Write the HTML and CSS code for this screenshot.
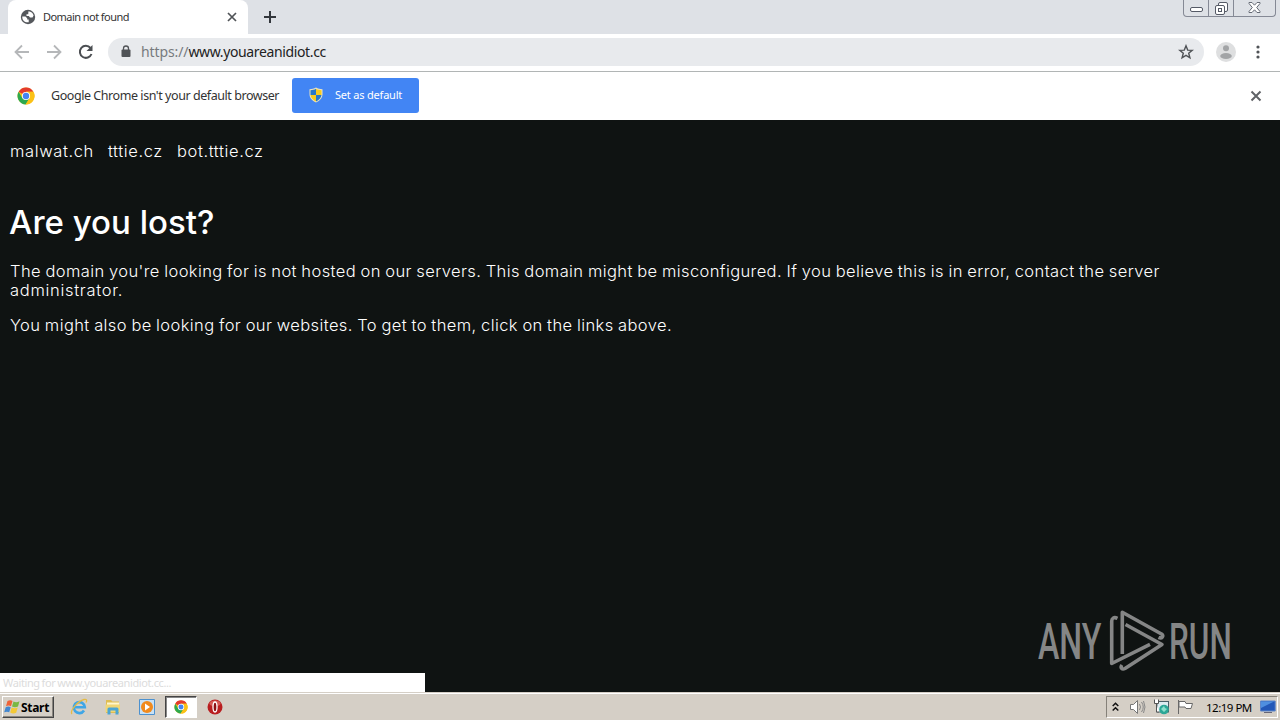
FILE: index.html
```html
<!DOCTYPE html>
<html lang="en">
<head>
  <meta charset="UTF-8">
  <meta name="viewport" content="width=device-width, initial-scale=1.0">
  <title>Domain not found</title>
  <link rel="stylesheet" href="styles.css">
</head>
<body>

  <svg class="defs" width="0" height="0">
    <symbol id="chrome" viewBox="0 0 18 18">
      <circle cx="9" cy="9" r="8.5" fill="#fbc116"/>
      <path d="M9 9 1.64 4.75A8.5 8.5 0 0 1 16.4 4.75H9Z" fill="#e33b2e"/>
      <path d="M1.64 4.75A8.5 8.5 0 0 0 8.6 17.5L12.7 11 9 9 5.3 11Z" fill="#2da94f"/>
      <path d="M9 4.75h7.4A8.5 8.5 0 0 1 8.6 17.5L12.7 11Z" fill="#fbc116"/>
      <circle cx="9" cy="9" r="4.1" fill="#fff"/>
      <circle cx="9" cy="9" r="3.2" fill="#4384f3"/>
    </symbol>
  </svg>

  <div class="tabstrip">
    <div class="tab">
      <svg class="globe" width="16" height="16" viewBox="0 0 16 16">
        <circle cx="8" cy="8" r="7.2" fill="#55585c"/>
        <path d="M2.300 7.500h3.200l1.700 1.700v1.300h1.500v2.800C5 13.800 2 11.500 2.300 7.500ZM8.500 2.300C11 2.500 13 4 13.600 6.500L12.500 8.500H10L8.800 7H6.500V5.300h1.800V3.800Z" fill="#fff"/>
      </svg>
      <span class="tab-title">Domain not found</span>
      <svg class="tab-close" width="10" height="10" viewBox="0 0 10 10"><path d="m1 1 8 8M9 1 1 9" stroke="#505357" stroke-width="1.7"/></svg>
    </div>
    <svg class="new-tab" width="12" height="12" viewBox="0 0 12 12"><path d="M6 0v12M0 6h12" stroke="#32363c" stroke-width="2"/></svg>
    <div class="window-buttons">
      <span class="wb"><svg width="13" height="13" viewBox="0 0 13 13"><rect x=".5" y="5.500" width="12" height="4" rx="1.500" fill="#fff" stroke="#555a66"/></svg></span>
      <span class="wb"><svg width="13" height="13" viewBox="0 0 13 13"><rect x="3.500" y=".5" width="9" height="9" rx="1.500" fill="#fff" stroke="#555a66"/><rect x=".5" y="3.500" width="9" height="9" rx="1.500" fill="#fff" stroke="#555a66"/><rect x="3.500" y="6.500" width="3" height="3" fill="#fff" stroke="#555a66"/></svg></span>
      <span class="wb wide"><svg width="13" height="12" viewBox="0 0 13 12"><path d="M1 .5h3L6.500 3.200 9 .5h3v1L8.700 5.500 12 9.500v1H9L6.500 7.800 4 10.500H1v-1l3.300-4L1 1.500Z" fill="#fff" stroke="#666b76"/></svg></span>
    </div>
  </div>

  <div class="toolbar">
    <svg class="nav-icon" width="16" height="16" viewBox="0 0 16 16"><path d="M15 8H2M8 1.500 1.500 8 8 14.500" fill="none" stroke="#b5b7b9" stroke-width="1.800"/></svg>
    <svg class="nav-icon" width="16" height="16" viewBox="0 0 16 16"><path d="M1 8h13M8 1.500 14.500 8 8 14.500" fill="none" stroke="#b5b7b9" stroke-width="1.800"/></svg>
    <svg class="nav-icon" width="16" height="16" viewBox="0 0 16 16"><path d="M13.500 10A6 6 0 1 1 12.500 4" fill="none" stroke="#4b4e52" stroke-width="2"/><path d="M14.500 1v6h-6Z" fill="#4b4e52"/></svg>
    <div class="omnibox">
      <svg width="10" height="13" viewBox="0 0 10 13"><path d="M2.500 5V3.500a2.500 2.500 0 0 1 5 0V5" fill="none" stroke="#505357" stroke-width="1.300"/><rect x=".5" y="4.500" width="9" height="7.500" rx="1" fill="#505357"/></svg>
      <span class="url"><span class="scheme">https://</span>www.youareanidiot.cc</span>
      <svg class="star" width="16" height="16" viewBox="0 0 16 16"><path d="m8 1.800 1.700 4.300 4.500.3-3.500 2.900 1.200 4.500L8 11.300l-3.900 2.500 1.200-4.500-3.500-2.900 4.500-.3Z" fill="none" stroke="#505357" stroke-width="1.400"/></svg>
    </div>
    <svg class="avatar" width="20" height="20" viewBox="0 0 20 20"><circle cx="10" cy="10" r="10" fill="#dedfe0"/><circle cx="10" cy="6.200" r="3" fill="#a2a4a6"/><ellipse cx="10" cy="14" rx="5.800" ry="3" fill="#a2a4a6"/></svg>
    <svg class="menu" width="4" height="14" viewBox="0 0 4 14" fill="#505357"><circle cx="2" cy="2" r="1.600"/><circle cx="2" cy="7" r="1.600"/><circle cx="2" cy="12" r="1.600"/></svg>
  </div>

  <div class="infobar">
    <svg width="18" height="18"><use href="#chrome"/></svg>
    <span class="info-text">Google Chrome isn't your default browser</span>
    <button class="default-btn">
      <svg width="14" height="16" viewBox="0 0 14 16">
        <path d="M7 .5c2 1.300 4 1.700 6.500 1.700V7c0 4-2.500 6.500-6.500 8.500C3 13.500.5 11 .5 7V2.200C3 2.200 5 1.800 7 .5Z" fill="#e9e3c0"/>
        <path d="M7 1.800V8H1.500V3.200C3.500 3.200 5.400 2.800 7 1.800ZM12.500 8C12.200 11 10 13 7 14.500V8Z" fill="#2878c8"/>
        <path d="M7 1.800c1.600 1 3.500 1.400 5.500 1.400V8H7ZM1.500 8H7v6.500C4 13 1.800 11 1.500 8Z" fill="#f9cb1c"/>
      </svg>
      <span>Set as default</span>
    </button>
    <svg class="info-close" width="12" height="12" viewBox="0 0 12 12"><path d="m1.500 1.500 9 9M10.500 1.500l-9 9" stroke="#606367" stroke-width="2"/></svg>
  </div>

  <div class="page">
    <nav class="links">
      <a>malwat.ch</a>
      <a>tttie.cz</a>
      <a>bot.tttie.cz</a>
    </nav>
    <h1>Are you lost?</h1>
    <p>The domain you're looking for is not hosted on our servers. This domain might be misconfigured. If you believe this is in error, contact the server<br><span class="wide-word">administrator.</span></p>
    <p>You might also be looking for our websites. To get to them, click on the links above.</p>

    <div class="status">Waiting for www.youareanidiot.cc...</div>

    <svg class="watermark" width="204" height="66" viewBox="0 0 204 66">
      <g class="mark-text">
        <text transform="translate(0 50) scale(.64 1)" textLength="99" lengthAdjust="spacingAndGlyphs">ANY</text>
        <text transform="translate(131 50) scale(.64 1)" textLength="98" lengthAdjust="spacingAndGlyphs">RUN</text>
      </g>
      <g fill="none" stroke="#858686" stroke-width="3.600" stroke-linejoin="round">
        <path d="M79.500 9.300c-3.500-1.500-5.800-.3-5.800 3V54.500L112 35.300"/>
        <path d="M84.300 45V3.300L123.500 25c2.500 2 .5 5-3 3.300"/>
        <path d="M87.500 15.500 124 35.500 87 59.500c-3 1.500-5-1-3-3.500"/>
      </g>
    </svg>
  </div>

  <div class="taskbar">
    <div class="start">
      <svg width="17" height="16" viewBox="0 0 17 16">
        <path d="M3.500 2c2-1 3.500-1 5 0L7 7.200c-1.600-.8-3.200-.8-5 0Z" fill="#ee6338"/>
        <path d="M9.500 2.500c2 1 4 .8 6-.2L14 7.500c-2 1-4 1-6 0Z" fill="#79b843"/>
        <path d="M1.700 8.200c1.800-.8 3.400-.8 5 0l-1.500 5.100c-1.500-.9-3-.9-5 0Z" fill="#4287d0"/>
        <path d="M7.700 8.500c2 1 4 1 6 0l-1.500 5.200c-2 1-4 .9-6-.2Z" fill="#f4c936"/>
      </svg>
      <span>Start</span>
    </div>
    <div class="quick">
      <span class="task"><svg width="18" height="18" viewBox="0 0 18 18"><path d="M14 12.500a5.500 5.500 0 1 1 .8-3.300H5" fill="none" stroke="#3fa6e6" stroke-width="2.600"/><path d="M2 16C-.5 13 8 3 14 1.500c3-.7 3 1.300 2 3" fill="none" stroke="#e5bb45" stroke-width="1.300"/></svg></span>
      <span class="task"><svg width="18" height="18" viewBox="0 0 18 18"><path d="M2 2h5l1.500 1.500H15V15H2Z" fill="#dfbd52"/><path d="M3 4.500h12v3H3Z" fill="#fff6cb"/><path d="M1.500 6.500H16V14H1.500Z" fill="#f0d676"/><path d="M3.500 16.500v-5.500q0-1.500 1.500-1.500h8q1.500 0 1.500 1.500v5.500h-3v-4h-5v4Z" fill="#4ba5d3"/></svg></span>
      <span class="task"><svg width="18" height="18" viewBox="0 0 18 18"><path d="M1.500 1.500h15v15h-15Z" fill="#c8e1f5" stroke="#4c91cf"/><circle cx="9" cy="9" r="6" fill="#f18a1c"/><path d="m7 5.500 5 3.500-5 3.500Z" fill="#fff"/></svg></span>
      <span class="task active"><svg width="14" height="14"><use href="#chrome"/></svg></span>
      <span class="task"><svg width="16" height="16" viewBox="0 0 16 16"><circle cx="8" cy="8" r="7.500" fill="#b91e20"/><ellipse cx="8" cy="4.500" rx="5.500" ry="3" fill="#d65b56"/><ellipse cx="8" cy="8" rx="2" ry="5" fill="#8d1013" stroke="#fff" stroke-width="1.300"/></svg></span>
    </div>
    <div class="tray">
      <svg class="chev" width="7" height="10" viewBox="0 0 7 10"><path d="m.7 4 2.800-2.800L6.300 4M.7 8.500l2.800-2.800 2.800 2.800" fill="none" stroke="#111" stroke-width="1.500"/></svg>
      <svg class="sound" width="17" height="16" viewBox="0 0 17 16"><path d="M1.500 5.500h3l4-4v13l-4-4h-3Z" fill="#fff" stroke="#777"/><path d="M10.500 5q2 3 0 6M12.500 3q3.500 5 0 10M14.500 2q3 6 0 12" fill="none" stroke="#888"/></svg>
      <svg class="net" width="17" height="16" viewBox="0 0 17 16"><rect x="4" y="2.500" width="11.500" height="10.500" fill="#dcecf0" stroke="#4a6068"/><path d="M1.500.5v4h4v-4M3.500 4.500V13H6" fill="#fff" stroke="#555"/><circle cx="11" cy="10.500" r="4.800" fill="#2ba797"/><path d="m8 10 3-3 1 2 2 1-3 3Z" fill="#8de0cc"/></svg>
      <svg class="flag" width="17" height="16" viewBox="0 0 17 16"><path d="M1.500 1v14M2 2.500h6l1 2h6.500L14 9.500H9L8 8H2Z" fill="#fff" stroke="#686868"/></svg>
      <span class="clock">12:19 PM</span>
      <svg class="desk" width="16" height="14" viewBox="0 0 16 14"><path d="M.5 1h14.700v10H.5Z" fill="#2358b8" stroke="#5f86c8"/><path d="M1 1.500h13L1 8Z" fill="#4f8fe0"/><path d="M4 12.500h8" stroke="#667"/></svg>
    </div>
  </div>

</body>
</html>
```
FILE: styles.css
```css
* {
  box-sizing: border-box;
}

body {
  margin: 0;
  width: 1280px;
  height: 720px;
  overflow: hidden;
  display: flex;
  flex-direction: column;
  font-family: "Noto Sans", sans-serif;
  background: #fff;
}

svg {
  display: block;
  flex-shrink: 0;
}

.defs {
  position: absolute;
}

/* browser window */
.tabstrip {
  height: 34px;
  background: #dee1e6;
  display: flex;
  padding-left: 8px;
}

.tab {
  width: 240px;
  background: #fff;
  border-radius: 8px 8px 0 0;
  display: flex;
  align-items: center;
  padding: 0 11px 0 12px;
}

.tab-title {
  flex: 1;
  margin-left: 7px;
  padding-bottom: 1px;
  font-size: 11px;
  letter-spacing: -0.55px;
  color: #333;
}

.new-tab {
  margin: 11px 0 0 16px;
}

.window-buttons {
  display: flex;
  margin-left: auto;
  margin-right: 4px;
  width: 93px;
  height: 17px;
  border: 1px solid #858995;
  border-top: none;
  border-radius: 0 0 4px 4px;
}

.wb {
  width: 25px;
  display: flex;
  justify-content: center;
  align-items: center;
  border-right: 1px solid #858995;
}

.wb.wide {
  flex: 1;
  border-right: none;
}

.toolbar {
  height: 38px;
  display: flex;
  align-items: center;
  padding: 0 20px 2px 14px;
  border-bottom: 1px solid #b1b5b5;
}

.nav-icon {
  margin-right: 16px;
}

.omnibox {
  width: 1096px;
  height: 28px;
  margin-left: -2px;
  border-radius: 14px;
  background: #e8eaed;
  display: flex;
  align-items: center;
  padding: 0 10px 0 13px;
}

.url {
  flex: 1;
  margin-left: 10px;
  font-size: 14px;
  letter-spacing: -0.37px;
  color: #222;
}

.scheme {
  color: #777a7e;
  letter-spacing: -0.1px;
}

.avatar {
  margin-left: 12px;
}

.menu {
  margin-left: auto;
}

.infobar {
  height: 48px;
  display: flex;
  align-items: center;
  padding: 0 18px 0 17px;
}

.info-text {
  width: 241px;
  margin-left: 16px;
  padding-bottom: 1px;
  font-size: 12.5px;
  letter-spacing: -0.44px;
  white-space: nowrap;
  color: #333;
}

.default-btn {
  width: 127px;
  height: 35px;
  margin-bottom: 1px;
  border: none;
  border-radius: 3px;
  background: #4285f4;
  color: #fff;
  font-family: inherit;
  font-size: 11px;
  letter-spacing: -0.2px;
  display: flex;
  align-items: center;
  gap: 12px;
  padding: 0 0 2px 17px;
  white-space: nowrap;
}

.info-close {
  margin-left: auto;
}

/* page content */
.page {
  position: relative;
  height: 572px;
  padding: 22px 10px 0;
  background: #0f1312;
  color: #fff;
  font-family: "Inter", sans-serif;
  font-weight: 300;
  font-size: 16.5px;
  line-height: 19px;
  letter-spacing: 0.4px;
  word-spacing: -0.6px;
  white-space: nowrap;
}

.links {
  display: flex;
  gap: 14px;
  letter-spacing: 0.62px;
}

h1 {
  margin: 41px 0 20px -1px;
  font-size: 33px;
  font-weight: 500;
  line-height: 40px;
  letter-spacing: 0;
  word-spacing: 0;
}

p {
  margin: 0 0 16px;
}

.wide-word {
  letter-spacing: 0.7px;
}

.status {
  position: absolute;
  left: 0;
  bottom: 0;
  width: 425px;
  height: 19px;
  padding-left: 3px;
  background: #fff;
  color: #dcdcdc;
  font-family: "Noto Sans", sans-serif;
  font-size: 11px;
  font-weight: 400;
  letter-spacing: -0.38px;
}

.watermark {
  position: absolute;
  left: 1038px;
  top: 489px;
}

.mark-text {
  fill: #858686;
  font-family: "Roboto", sans-serif;
  font-size: 50.5px;
  font-weight: 500;
  letter-spacing: 0;
}

/* taskbar */
.taskbar {
  height: 28px;
  background: #d5cfc6;
  border-top: 1px solid #d5cfc6;
  box-shadow: inset 0 1px #fff;
  display: flex;
  align-items: center;
  padding: 1px 2px 0;
}

.start {
  width: 52px;
  height: 22px;
  display: flex;
  align-items: center;
  padding-left: 1px;
  border: 1px solid;
  border-color: #fff #444 #444 #fff;
  box-shadow: inset -1px -1px #8a867f;
  font-size: 12px;
  font-weight: 700;
  letter-spacing: -0.3px;
  color: #000;
}

.quick {
  display: flex;
  margin-left: 9px;
  gap: 2px;
}

.task {
  width: 32px;
  height: 22px;
  display: flex;
  align-items: center;
  justify-content: center;
}

.task.active {
  background: #fff;
  border: 1px solid;
  border-color: #444 #fff #fff #444;
  box-shadow: inset 1px 1px #888;
}

.tray {
  width: 172px;
  height: 22px;
  margin-left: auto;
  display: flex;
  align-items: center;
  padding-left: 5px;
  border: 1px solid;
  border-color: #858179 #fff #fff #858179;
}

.chev {
  margin-right: 10px;
}

.sound,
.net {
  margin-right: 7px;
}

.clock {
  width: 47px;
  margin: 0 7px 0 12px;
  font-size: 11.5px;
  letter-spacing: -0.5px;
  white-space: nowrap;
  color: #000;
}
```
